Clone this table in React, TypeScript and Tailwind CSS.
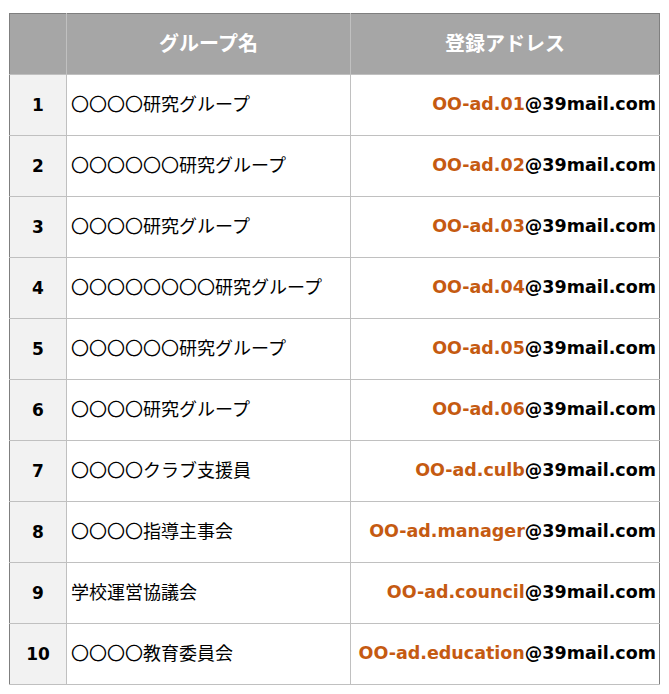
const rows = [
  { no: 1, name: "〇〇〇〇研究グループ", local: "OO-ad.01" },
  { no: 2, name: "〇〇〇〇〇〇研究グループ", local: "OO-ad.02" },
  { no: 3, name: "〇〇〇〇研究グループ", local: "OO-ad.03" },
  { no: 4, name: "〇〇〇〇〇〇〇〇研究グループ", local: "OO-ad.04" },
  { no: 5, name: "〇〇〇〇〇〇研究グループ", local: "OO-ad.05" },
  { no: 6, name: "〇〇〇〇研究グループ", local: "OO-ad.06" },
  { no: 7, name: "〇〇〇〇クラブ支援員", local: "OO-ad.culb" },
  { no: 8, name: "〇〇〇〇指導主事会", local: "OO-ad.manager" },
  { no: 9, name: "学校運営協議会", local: "OO-ad.council" },
  { no: 10, name: "〇〇〇〇教育委員会", local: "OO-ad.education" },
];

export default function App() {
  return (
    <div className="min-h-[694px] bg-white pl-[9px] pt-[13px] font-['DejaVu_Sans','Noto_Sans_CJK_JP',sans-serif]">
      <table className="w-[650px] table-fixed border-collapse border border-[#7f7f7f]">
        <colgroup>
          <col className="w-[57px]" />
          <col className="w-[284px]" />
          <col className="w-[309px]" />
        </colgroup>
        <thead>
          <tr className="h-[61px] bg-[#a6a6a6] font-['Noto_Sans_CJK_JP',sans-serif] text-[20px] font-bold text-white">
            <th className="border border-[#c0c0c0] border-t-[#7f7f7f] border-l-[#7f7f7f]"></th>
            <th className="border border-[#c0c0c0] border-t-[#7f7f7f] pb-[2px]">グループ名</th>
            <th className="border border-[#c0c0c0] border-t-[#7f7f7f] border-r-[#7f7f7f] pb-[2px]">登録アドレス</th>
          </tr>
        </thead>
        <tbody>
          {rows.map((row) => (
            <tr key={row.no} className="h-[61px]">
              <td className="border border-[#c0c0c0] border-l-[#7f7f7f] bg-[#f2f2f2] pt-[1px] text-center text-[17px] font-bold text-black">
                {row.no}
              </td>
              <td className="border border-[#c0c0c0] pb-[3px] pl-1 font-['Noto_Sans_CJK_JP',sans-serif] text-[18px] text-black">
                {row.name}
              </td>
              <td className="border border-[#c0c0c0] border-r-[#7f7f7f] pb-[1px] pr-[3px] text-right text-[17.5px] font-bold text-black">
                <span className="text-[#c55a11]">{row.local}</span>@39mail.com
              </td>
            </tr>
          ))}
        </tbody>
      </table>
    </div>
  );
}
